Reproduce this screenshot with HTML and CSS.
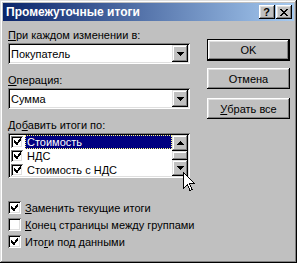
FILE: index.html
```html
<!DOCTYPE html>
<html lang="ru">
<head>
<meta charset="UTF-8" />
<title>Промежуточные итоги</title>
<link rel="stylesheet" href="styles.css">
</head>
<body>
<div class="window">
    <div class="titlebar">
        <span class="title">Промежуточные итоги</span>
        <div class="caption-btns">
            <span class="cbtn help">?</span>
            <span class="cbtn">
                <svg width="8" height="7" viewBox="0 0 8 7" shape-rendering="crispEdges">
                    <path d="M0 0h2v1h-2zM6 0h2v1h-2zM1 1h2v1h-2zM5 1h2v1h-2zM2 2h4v1h-4zM3 3h2v1h-2zM2 4h4v1h-4zM1 5h2v1h-2zM5 5h2v1h-2zM0 6h2v1h-2zM6 6h2v1h-2z" fill="#000"/>
                </svg>
            </span>
        </div>
    </div>

    <div class="dialog">
        <div class="left">
            <div class="label"><u>П</u>ри каждом изменении в:</div>
            <div class="combo">
                <span class="value">Покупатель</span>
                <span class="drop"><svg width="7" height="4" viewBox="0 0 7 4" shape-rendering="crispEdges"><path d="M0 0h7v1h-7zM1 1h5v1h-5zM2 2h3v1h-3zM3 3h1v1h-1z" fill="#000"/></svg></span>
            </div>

            <div class="label label-gap"><u>О</u>перация:</div>
            <div class="combo">
                <span class="value">Сумма</span>
                <span class="drop"><svg width="7" height="4" viewBox="0 0 7 4" shape-rendering="crispEdges"><path d="M0 0h7v1h-7zM1 1h5v1h-5zM2 2h3v1h-3zM3 3h1v1h-1z" fill="#000"/></svg></span>
            </div>

            <div class="label label-gap">До<u>б</u>авить итоги по:</div>
            <div class="listbox">
                <div class="items">
                    <div class="item">
                        <span class="check small checked"></span>
                        <span class="text selected">Стоимость</span>
                    </div>
                    <div class="item">
                        <span class="check small checked"></span>
                        <span class="text">НДС</span>
                    </div>
                    <div class="item">
                        <span class="check small checked"></span>
                        <span class="text">Стоимость с НДС</span>
                    </div>
                </div>
                <div class="scrollbar">
                    <span class="sbtn"><svg width="7" height="4" viewBox="0 0 7 4" shape-rendering="crispEdges"><path d="M3 0h1v1h-1zM2 1h3v1h-3zM1 2h5v1h-5zM0 3h7v1h-7z" fill="#000"/></svg></span>
                    <span class="thumb"></span>
                    <span class="sbtn"><svg width="7" height="4" viewBox="0 0 7 4" shape-rendering="crispEdges"><path d="M0 0h7v1h-7zM1 1h5v1h-5zM2 2h3v1h-3zM3 3h1v1h-1z" fill="#000"/></svg></span>
                </div>
            </div>

            <div class="options">
                <div class="option"><span class="check checked"></span><span><u>З</u>аменить текущие итоги</span></div>
                <div class="option"><span class="check"></span><span><u>К</u>онец страницы между группами</span></div>
                <div class="option"><span class="check checked"></span><span>Ито<u>г</u>и под данными</span></div>
            </div>
        </div>

        <div class="right">
            <div class="btn default">OK</div>
            <div class="btn btn-cancel">Отмена</div>
            <div class="btn btn-clear"><u>У</u>брать все</div>
        </div>
    </div>

    <!-- курсор мыши поверх списка -->
    <svg class="cursor" width="12" height="20" viewBox="0 0 12 20" shape-rendering="crispEdges">
        <path d="M0.5 0.5 V16.5 L4.5 12.5 L7 18.5 L9 17.5 L6.5 11.5 H11.5 Z" fill="#fff" stroke="#000" stroke-width="1"/>
    </svg>
</div>
</body>
</html>
```

FILE: styles.css
```css
body {
    margin: 0;
    background: #c0c0c0;
    font-family: "Liberation Sans", Arial, sans-serif;
    font-size: 11px;
    color: #000;
}
u {
    text-decoration: underline;
    text-underline-offset: 1px;
}

/* Окно */
.window {
    position: relative;
    width: 297px;
    height: 263px;
    box-sizing: border-box;
    padding: 3px;
    background: #c0c0c0;
    box-shadow: inset -1px -1px #000, inset 1px 1px #dfdfdf, inset -2px -2px #808080, inset 2px 2px #fff;
}
.titlebar {
    height: 18px;
    display: flex;
    align-items: center;
    justify-content: space-between;
    padding: 0 2px 0 3px;
    background: linear-gradient(to right, #0a246a, #a6caf0);
}
.title {
    color: #fff;
    font-weight: bold;
    font-size: 12px;
}
.caption-btns {
    display: flex;
    gap: 1px;
}
.cbtn {
    width: 16px;
    height: 14px;
    box-sizing: border-box;
    display: flex;
    align-items: center;
    justify-content: center;
    background: #c0c0c0;
    box-shadow: inset -1px -1px #000, inset 1px 1px #fff, inset -2px -2px #808080, inset 2px 2px #dfdfdf;
}
.help {
    font-weight: bold;
    font-size: 11px;
    line-height: 14px;
    padding-right: 1px;
}

.dialog {
    display: flex;
    padding: 8px 0 0 5px;
}
.left {
    width: 182px;
}
.right {
    margin-left: 17px;
    width: 83px;
    padding-top: 10px;
}

.label {
    height: 13px;
    line-height: 13px;
    margin-bottom: 1px;
}
.label-gap {
    margin-top: 10px;
}

/* Поле со списком */
.combo {
    height: 21px;
    box-sizing: border-box;
    display: flex;
    align-items: center;
    justify-content: space-between;
    padding: 2px;
    background: #fff;
    box-shadow: inset 1px 1px #808080, inset -1px -1px #fff, inset 2px 2px #000, inset -2px -2px #dfdfdf;
}
.value {
    padding-left: 1px;
}
.drop, .sbtn {
    width: 16px;
    height: 17px;
    box-sizing: border-box;
    display: flex;
    align-items: center;
    justify-content: center;
    background: #c0c0c0;
    box-shadow: inset -1px -1px #000, inset 1px 1px #dfdfdf, inset -2px -2px #808080, inset 2px 2px #fff;
}
.drop svg, .sbtn svg {
    display: block;
}

/* Список с флажками */
.listbox {
    height: 45px;
    box-sizing: border-box;
    display: flex;
    padding: 2px;
    background: #fff;
    box-shadow: inset 1px 1px #808080, inset -1px -1px #fff, inset 2px 2px #000, inset -2px -2px #dfdfdf;
}
.items {
    flex: 1;
}
.item {
    height: 14px;
    display: flex;
    align-items: center;
}
.text {
    flex: 1;
    height: 14px;
    line-height: 14px;
    margin-left: 2px;
    padding-left: 2px;
    box-sizing: border-box;
}
.selected {
    background: #000080;
    color: #fff;
    outline: 1px dotted #ffff80;
    outline-offset: -1px;
}
.scrollbar {
    width: 16px;
    display: flex;
    flex-direction: column;
    background: repeating-conic-gradient(#c0c0c0 0 25%, #fff 0 50%) 0 0 / 2px 2px;
}
.scrollbar .sbtn {
    height: 16px;
}
.thumb {
    height: 9px;
    background: #c0c0c0;
    box-shadow: inset -1px -1px #000, inset 1px 1px #dfdfdf, inset -2px -2px #808080, inset 2px 2px #fff;
}

/* Флажки */
.check {
    width: 13px;
    height: 13px;
    flex: none;
    box-sizing: border-box;
    background: #fff;
    box-shadow: inset 1px 1px #808080, inset -1px -1px #fff, inset 2px 2px #000, inset -2px -2px #dfdfdf;
}
.check.small {
    width: 12px;
    height: 12px;
    margin-left: 1px;
}
.checked {
    background: #fff url("data:image/svg+xml,%3Csvg xmlns='http://www.w3.org/2000/svg' width='7' height='7' shape-rendering='crispEdges'%3E%3Cpath d='M6 0h1v3h-1zM5 1h1v3h-1zM4 2h1v3h-1zM0 2h1v3h-1zM1 3h1v3h-1zM2 4h2v3h-2z' fill='%23000'/%3E%3C/svg%3E") no-repeat 3px 3px;
}
.check.small.checked {
    background-position: 3px 2px;
}

.options {
    margin-top: 21px;
}
.option {
    height: 17px;
    display: flex;
    align-items: center;
    gap: 4px;
    white-space: nowrap;
}

/* Кнопки */
.btn {
    height: 21px;
    box-sizing: border-box;
    display: flex;
    align-items: center;
    justify-content: center;
    background: #c0c0c0;
    box-shadow: inset -1px -1px #000, inset 1px 1px #fff, inset -2px -2px #808080, inset 2px 2px #dfdfdf;
}
.default {
    height: 22px;
    border: 1px solid #000;
}
.btn-cancel {
    margin-top: 7px;
}
.btn-clear {
    margin-top: 9px;
}

.cursor {
    position: absolute;
    left: 183px;
    top: 172px;
}
```
